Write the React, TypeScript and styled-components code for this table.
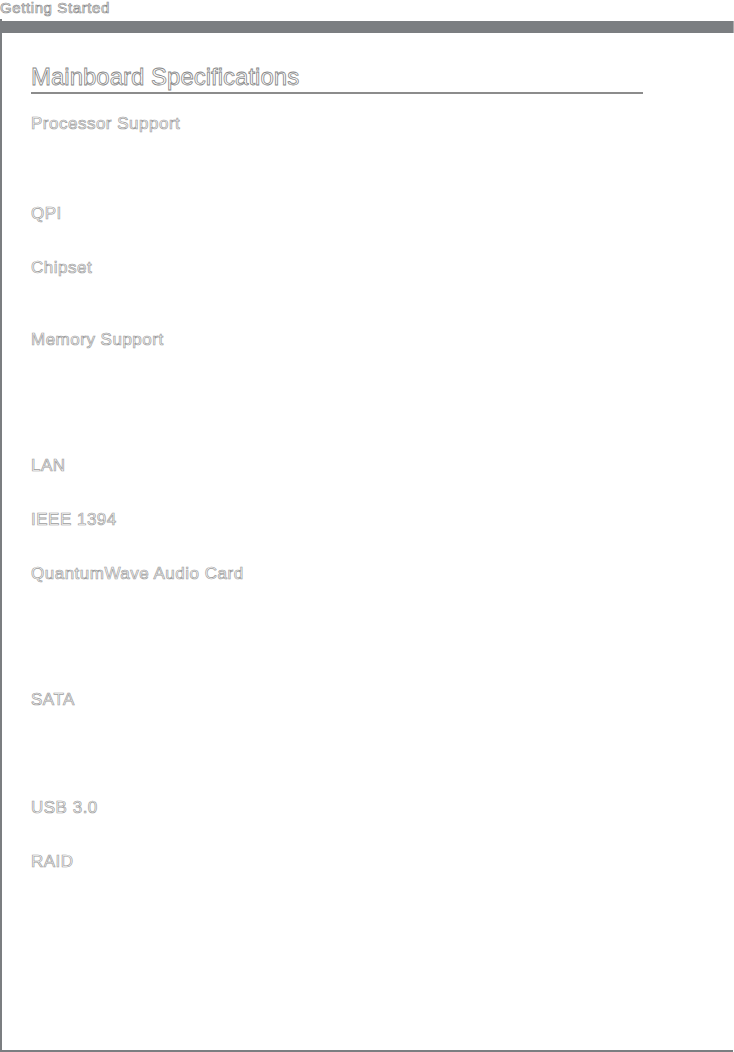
import React from "react";
import styled, { createGlobalStyle } from "styled-components";

const GlobalStyle = createGlobalStyle`
  html, body {
    margin: 0;
    padding: 0;
    background: #ffffff;
  }
  body {
    font-family: "Liberation Sans", Arial, sans-serif;
  }
`;

const Page = styled.div`
  width: 734px;
  height: 1052px;
  display: flex;
  flex-direction: column;
  box-sizing: border-box;
  overflow: hidden;
`;

const RunningHead = styled.div`
  height: 19px;
  font-size: 15px;
  line-height: 15px;
  letter-spacing: 0.6px;
  color: #ffffff;
  -webkit-text-stroke: 0.7px #8a8a8a;
`;

const Frame = styled.div`
  flex: 1;
  display: flex;
  flex-direction: column;
  width: 733px;
  border-left: 2px solid #7b7e81;
  border-bottom: 2px solid #7b7e81;
  box-sizing: border-box;
  padding-top: 2px;
`;

const Bar = styled.div`
  height: 12px;
  background: #7b7e81;
  margin-left: -2px;
  margin-right: -1px;
  border-right: 1px solid #a9abad;
`;

const Content = styled.div`
  padding: 30px 0 0 29px;
  display: flex;
  flex-direction: column;
`;

const Heading = styled.h1`
  margin: 0;
  width: 612px;
  font-size: 24px;
  font-weight: normal;
  line-height: 27px;
  color: #ffffff;
  -webkit-text-stroke: 0.8px #858585;
  border-bottom: 2px solid #8c8c8c;
  padding-bottom: 2px;
`;

const SpecList = styled.div`
  margin-top: 21px;
  display: flex;
  flex-direction: column;
`;

const SpecRow = styled.div<{ $lines: number }>`
  display: grid;
  grid-template-columns: 260px 1fr;
  min-height: ${(p) => p.$lines * 18}px;
`;

const Label = styled.div`
  font-size: 17px;
  line-height: 18px;
  letter-spacing: 0.5px;
  color: #ffffff;
  -webkit-text-stroke: 0.7px #9d9d9d;
`;

const Value = styled.div``;

const specs: { label: string; lines: number }[] = [
  { label: "Processor Support", lines: 5 },
  { label: "QPI", lines: 3 },
  { label: "Chipset", lines: 4 },
  { label: "Memory Support", lines: 7 },
  { label: "LAN", lines: 3 },
  { label: "IEEE 1394", lines: 3 },
  { label: "QuantumWave Audio Card", lines: 7 },
  { label: "SATA", lines: 6 },
  { label: "USB 3.0", lines: 3 },
  { label: "RAID", lines: 3 },
];

export default function App() {
  return (
    <Page>
      <GlobalStyle />
      <RunningHead>Getting Started</RunningHead>
      <Frame>
        <Bar />
        <Content>
          <Heading>Mainboard Specifications</Heading>
          <SpecList>
            {specs.map((s) => (
              <SpecRow key={s.label} $lines={s.lines}>
                <Label>{s.label}</Label>
                <Value />
              </SpecRow>
            ))}
          </SpecList>
        </Content>
      </Frame>
    </Page>
  );
}
